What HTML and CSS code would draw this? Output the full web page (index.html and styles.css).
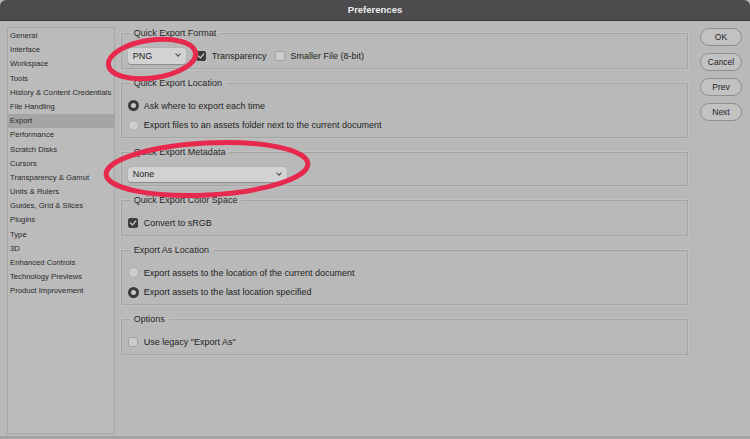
FILE: index.html
```html
<!DOCTYPE html>
<html lang="en">
<head>
    <meta charset="UTF-8">
    <title>Preferences</title>
    <link rel="stylesheet" href="styles.css">
</head>
<body>
    <div class="titlebar">Preferences</div>
    <div class="window">
        <ul class="sidebar">
            <li>General</li>
            <li>Interface</li>
            <li>Workspace</li>
            <li>Tools</li>
            <li>History &amp; Content Credentials</li>
            <li>File Handling</li>
            <li class="active">Export</li>
            <li>Performance</li>
            <li>Scratch Disks</li>
            <li>Cursors</li>
            <li>Transparency &amp; Gamut</li>
            <li>Units &amp; Rulers</li>
            <li>Guides, Grid &amp; Slices</li>
            <li>Plugins</li>
            <li>Type</li>
            <li>3D</li>
            <li>Enhanced Controls</li>
            <li>Technology Previews</li>
            <li>Product Improvement</li>
        </ul>

        <div class="panel">
            <fieldset class="group">
                <legend>Quick Export Format</legend>
                <div class="row">
                    <div class="select small">PNG</div>
                    <span class="check on"></span><span class="label">Transparency</span>
                    <span class="check gap"></span><span class="label">Smaller File (8-bit)</span>
                </div>
            </fieldset>

            <fieldset class="group">
                <legend>Quick Export Location</legend>
                <div class="row two"><span class="radio on"></span><span class="label">Ask where to export each time</span></div>
                <div class="row two"><span class="radio"></span><span class="label">Export files to an assets folder next to the current document</span></div>
            </fieldset>

            <fieldset class="group">
                <legend>Quick Export Metadata</legend>
                <div class="row tight">
                    <div class="select wide">None</div>
                </div>
            </fieldset>

            <fieldset class="group">
                <legend>Quick Export Color Space</legend>
                <div class="row"><span class="check on"></span><span class="label">Convert to sRGB</span></div>
            </fieldset>

            <fieldset class="group">
                <legend>Export As Location</legend>
                <div class="row two"><span class="radio"></span><span class="label">Export assets to the location of the current document</span></div>
                <div class="row two"><span class="radio on"></span><span class="label">Export assets to the last location specified</span></div>
            </fieldset>

            <fieldset class="group">
                <legend>Options</legend>
                <div class="row"><span class="check"></span><span class="label">Use legacy "Export As"</span></div>
            </fieldset>
        </div>

        <div class="buttons">
            <button>OK</button>
            <button>Cancel</button>
            <button>Prev</button>
            <button>Next</button>
        </div>
    </div>

    <!-- red annotation circles drawn over the dialog -->
    <svg class="marks" width="750" height="439" viewBox="0 0 750 439">
        <ellipse cx="152" cy="59" rx="44" ry="19" transform="rotate(-8 152 59)" />
        <ellipse cx="207" cy="169" rx="101" ry="26" transform="rotate(-3 207 169)" />
    </svg>
</body>
</html>
```

FILE: styles.css
```css
body {
    margin: 0;
    width: 750px;
    height: 439px;
    overflow: hidden;
    position: relative;
    background: #b9b9b9;
    font-family: "Liberation Sans", Arial, sans-serif;
    color: #1e1e1e;
}
.titlebar {
    height: 20px;
    line-height: 20px;
    background: #4c4c4e;
    border-bottom: 1px solid #3a3a3a;
    border-radius: 6px 6px 0 0;
    color: #ececec;
    font-weight: bold;
    font-size: 9.5px;
    text-align: center;
}
.window {
    display: flex;
    align-items: flex-start;
    height: 418px;
    padding: 6px 8px 0 7px;
    box-sizing: border-box;
    border-bottom: 3px solid #a4a4a4;
}
.sidebar {
    list-style: none;
    margin: 0;
    padding: 1px 0 0;
    width: 108px;
    height: 407px;
    box-sizing: border-box;
    border: 1px solid #a6a6a6;
    background: #bbbbbb;
    font-size: 7.7px;
    color: #2a2a2a;
}
.sidebar li {
    height: 14.2px;
    line-height: 14.2px;
    padding-left: 2px;
    white-space: nowrap;
}
.sidebar li.active {
    background: #a4a4a4;
}
.panel {
    width: 568px;
    margin-left: 6px;
}
.group {
    margin: 0 0 8px;
    padding: 0 6px 2px;
    border: 1px solid #a4a4a4;
    box-shadow: 0 0 0 1px rgba(255,255,255,0.12);
    font-size: 9px;
}
.group legend {
    padding: 0 4px;
    margin-left: 2px;
    line-height: 12px;
    font-size: 9px;
    color: #262626;
}
.row {
    display: flex;
    align-items: center;
    height: 20px;
}
.row.two {
    height: 19.5px;
}
.row.tight {
    height: 18px;
}
.row:first-of-type {
    margin-top: 7px;
}
.label {
    margin-left: 6px;
    white-space: nowrap;
}
.radio + .label {
    margin-left: 5px;
}
.check {
    width: 8px;
    height: 8px;
    border: 1px solid #a2a2a2;
    border-radius: 2px;
    background: #cbcbcb;
    flex: none;
    position: relative;
}
.check.on {
    background: #3e3e3e;
    border-color: #3e3e3e;
}
.check.on::after {
    content: "";
    position: absolute;
    left: 2px;
    top: 0px;
    width: 3px;
    height: 5px;
    border: solid #e6e6e6;
    border-width: 0 1.5px 1.5px 0;
    transform: rotate(40deg);
}
.check.gap {
    margin-left: 8px;
}
.radio {
    width: 9px;
    height: 9px;
    border: 1px solid #ababab;
    border-radius: 50%;
    background: #cecece;
    flex: none;
    box-sizing: content-box;
}
.radio.on {
    width: 5px;
    height: 5px;
    border: 3px solid #3c3c3c;
    background: #c9c9c9;
}
.select {
    position: relative;
    display: flex;
    align-items: center;
    box-sizing: border-box;
    height: 16px;
    padding: 0 5px;
    background: #d2d2d2;
    border-radius: 3px;
    box-shadow: 0 0.5px 1px rgba(0,0,0,0.25);
    font-size: 9px;
}
.select::after {
    content: "";
    position: absolute;
    right: 6px;
    top: 4px;
    width: 3px;
    height: 3px;
    border: solid #4a4a4a;
    border-width: 0 1px 1px 0;
    transform: rotate(45deg);
}
.select.small {
    width: 58px;
    margin-right: 10px;
}
.select.wide {
    width: 159px;
    height: 15px;
}
.buttons {
    display: flex;
    flex-direction: column;
    gap: 7px;
    margin-left: 12px;
    margin-top: 1px;
}
.buttons button {
    width: 42px;
    height: 18px;
    padding: 0;
    border: 1px solid #8e8e8e;
    border-radius: 9px;
    background: #c2c2c2;
    font-family: "Liberation Sans", Arial, sans-serif;
    font-size: 8.5px;
    color: #222;
}
.marks {
    position: absolute;
    left: 0;
    top: 0;
    pointer-events: none;
}
.marks ellipse {
    fill: none;
    stroke: #e8294e;
    stroke-width: 5;
}
```
